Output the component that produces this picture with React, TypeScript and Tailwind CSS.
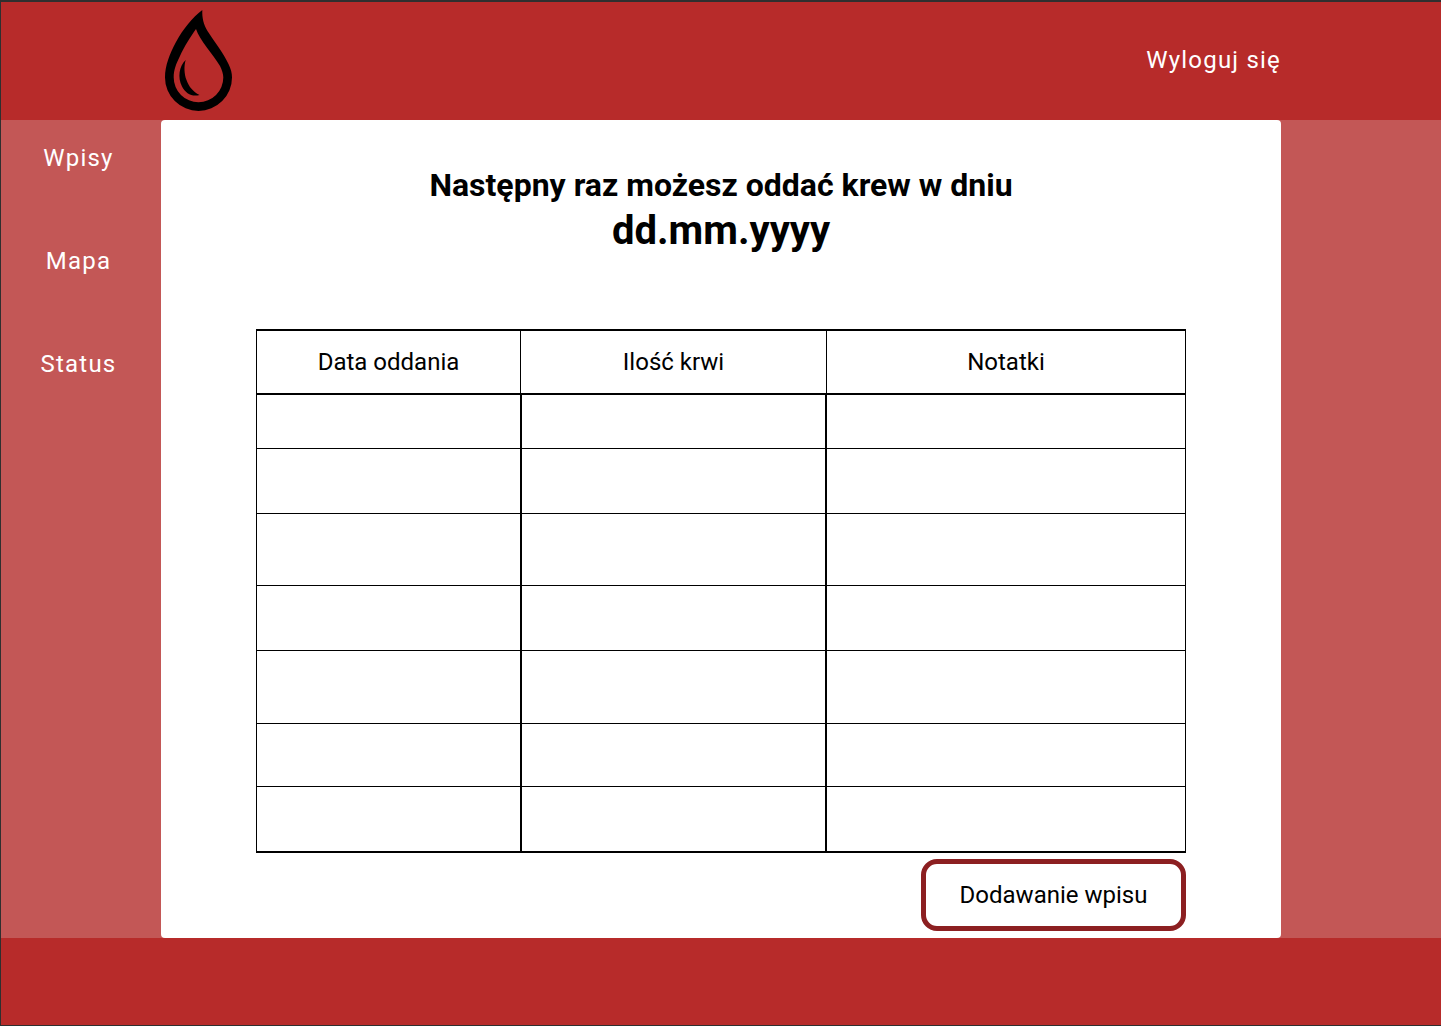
const rows = [
  { id: 1, height: "h-[54px]" },
  { id: 2, height: "h-[65px]" },
  { id: 3, height: "h-[72px]" },
  { id: 4, height: "h-[65px]" },
  { id: 5, height: "h-[73px]" },
  { id: 6, height: "h-[63px]" },
  { id: 7, height: "h-[66px]" },
];

const links = ["Wpisy", "Mapa", "Status"];

function DropLogo() {
  return (
    <svg viewBox="0 0 67 101" className="h-[101px] w-[67px]" role="img" aria-label="Kropla krwi">
      <path
        fillRule="evenodd"
        d="M37.3 0C37 8 38.500 14 42.500 21C50 33 58 42 63.500 54C66 59.500 67 63 67 67.400A33.500 33.500 0 0 1 0 67.400C0 56 4.500 44 11 32C18 19 27.500 7.500 37.300 0ZM31 19C26 26 19 37 15 46C11 54 8.700 60 8.700 67.400A24.700 24.700 0 0 0 58.300 67.400C58.300 64 57 60 55 56C48 44 34.500 30 31 19Z"
      />
      <path d="M20.700 50C18.800 56 19.200 64 21.500 70C24 77 28 81.500 34.500 85C27 87 20.500 83.500 17 76.500C12.500 67.500 14 56 20.700 50Z" />
    </svg>
  );
}

export default function App() {
  return (
    <div className="flex min-h-screen flex-col border-t-2 border-b border-l border-[#2f2f2f] bg-[#b72b2a] font-['Roboto',sans-serif] text-2xl text-black">
      <header className="flex h-[118px] items-center justify-between pr-40 pb-0.5 pl-[164px]">
        <a href="#start">
          <DropLogo />
        </a>
        <button type="button" className="tracking-wider text-white">
          Wyloguj się
        </button>
      </header>

      <div className="flex flex-1 bg-[#c35756]">
        <nav className="flex w-40 shrink-0 flex-col items-center gap-[71px] pt-[22px] pr-[5px]">
          {links.map((label) => (
            <a key={label} href={`#${label}`} className="tracking-wider text-white">
              {label}
            </a>
          ))}
        </nav>

        <main className="flex flex-1 flex-col rounded bg-white px-[95px] pb-[7px]">
          <h1 className="pt-11 text-center font-bold">
            <span className="block text-[32px] leading-[42px]">Następny raz możesz oddać krew w dniu</span>
            <span className="block text-[40px] leading-[50px]">dd.mm.yyyy</span>
          </h1>

          <table className="mt-[73px] w-full table-fixed border-separate border-spacing-0">
            <colgroup>
              <col className="w-[264px]" />
              <col className="w-[306px]" />
              <col />
            </colgroup>
            <thead>
              <tr className="h-[66px]">
                <th scope="col" className="border-y-2 border-l border-black p-0 font-normal">
                  Data oddania
                </th>
                <th scope="col" className="border-y-2 border-l border-black p-0 font-normal">
                  Ilość krwi
                </th>
                <th scope="col" className="border-x border-y-2 border-black p-0 font-normal">
                  Notatki
                </th>
              </tr>
            </thead>
            <tbody className="[&>tr:last-child>td]:border-b-2">
              {rows.map((row) => (
                <tr key={row.id} className={row.height}>
                  <td className="border-b border-l border-black p-0" />
                  <td className="border-r border-b border-l-2 border-black p-0" />
                  <td className="border-x border-b border-black p-0" />
                </tr>
              ))}
            </tbody>
          </table>

          <button
            type="button"
            className="mt-[6px] h-[72px] w-[265px] self-end rounded-2xl border-5 border-[#8c1f21]"
          >
            Dodawanie wpisu
          </button>
        </main>

        <aside className="w-40 shrink-0" />
      </div>

      <footer className="h-[87px]" />
    </div>
  );
}
